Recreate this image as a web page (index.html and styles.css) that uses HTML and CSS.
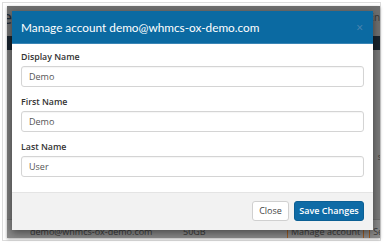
FILE: index.html
```html
<!DOCTYPE html>
<html>
<head>
    <link rel="stylesheet" href="styles.css">
</head>
<body>
<div class="frame">
    <div class="shot">
        <!-- page behind the dialog, dimmed by the backdrop -->
        <div class="page">
            <div class="page-top">
                <span class="logo">e</span>
                <span class="lang">Engl</span>
            </div>
            <div class="page-nav"></div>
            <div class="page-main">
                <span class="side-text">s</span>
            </div>
            <div class="page-row">
                <span class="cell-email">demo@whmcs-ox-demo.com</span>
                <span class="cell-quota">50GB</span>
                <span class="cell-btn">Manage account</span>
                <span class="cell-btn cell-last">Set P</span>
            </div>
        </div>

        <div class="modal">
            <div class="modal-header">
                <h4>Manage account demo@whmcs-ox-demo.com</h4>
                <span class="close-x">&times;</span>
            </div>
            <div class="modal-body">
                <div class="field">
                    <label>Display Name</label>
                    <input type="text" value="Demo">
                </div>
                <div class="field">
                    <label>First Name</label>
                    <input type="text" value="Demo">
                </div>
                <div class="field">
                    <label>Last Name</label>
                    <input type="text" value="User">
                </div>
            </div>
            <div class="modal-footer">
                <button class="btn btn-default">Close</button>
                <button class="btn btn-primary">Save Changes</button>
            </div>
        </div>
    </div>
</div>
</body>
</html>
```

FILE: styles.css
```css
body {
    margin: 0;
    background: #ffffff;
    font-family: "Open Sans", Arial, sans-serif;
}

.frame {
    margin: 2px;
    width: 379px;
    height: 239px;
    box-sizing: border-box;
    border: 1px solid #dcdcdc;
    padding: 3px 2px 4px 4px;
}

.shot {
    position: relative;
    width: 373px;
    height: 232px;
    overflow: hidden;
    background: #737373;
    box-shadow: 0 1px 3px rgba(0, 0, 0, 0.35);
}

.page {
    display: flex;
    flex-direction: column;
    height: 100%;
}

.page-top {
    height: 30px;
    display: flex;
    justify-content: space-between;
    background: #6e6e6e;
    color: #2a2a2a;
    font-size: 10px;
}

.logo {
    font-size: 18px;
    line-height: 22px;
    margin-left: -5px;
    color: #1d2a36;
}

.lang {
    line-height: 22px;
    margin-right: -8px;
    color: #3a3a3a;
}

.page-nav {
    height: 14px;
    background: #18232d;
}

.page-main {
    flex: 1;
    background: #787878;
    display: flex;
    justify-content: flex-end;
    border-bottom: 1px solid #6c6c6c;
}

.side-text {
    margin-top: 100px;
    margin-right: -2px;
    font-size: 9px;
    color: #3a3a3a;
}

.page-row {
    height: 18px;
    display: flex;
    align-items: flex-end;
    background: #888888;
    font-size: 9px;
    color: #3a3a3a;
    line-height: 12px;
    white-space: nowrap;
}

.page-row span {
    flex-shrink: 0;
}

.cell-email {
    margin-left: 23px;
    width: 153px;
}

.cell-quota {
    width: 104px;
}

.cell-btn {
    border-left: 1px solid #9a5a22;
    border-right: 1px solid #9a5a22;
    padding: 0 3px;
    margin-right: 5px;
}

.cell-last {
    border-right: none;
}

.modal {
    position: absolute;
    left: 5px;
    top: 5px;
    width: 361px;
    height: 219px;
    background: #ffffff;
    box-shadow: 0 3px 8px rgba(0, 0, 0, 0.45);
    display: flex;
    flex-direction: column;
}

.modal-header {
    height: 33px;
    background: #0b6aa2;
    border-bottom: 1px solid #3a85b5;
    box-sizing: border-box;
    display: flex;
    align-items: center;
    justify-content: space-between;
    padding: 0 10px 0 9px;
}

.modal-header h4 {
    margin: 0;
    font-family: Lato, "Open Sans", sans-serif;
    font-weight: normal;
    font-size: 11.8px;
    color: #ffffff;
}

.close-x {
    font-size: 12px;
    color: #4f87b0;
}

.modal-body {
    flex: 1;
    padding: 7px 9px 0 9px;
}

.field {
    margin-bottom: 9px;
}

.field label {
    display: block;
    font-size: 8.8px;
    font-weight: 600;
    line-height: 12px;
    color: #333333;
    margin-bottom: 3px;
}

.field input {
    display: block;
    width: 100%;
    height: 21px;
    box-sizing: border-box;
    border: 1px solid #d4d4d4;
    border-radius: 3px;
    padding: 0 7px;
    font-family: "Open Sans", Arial, sans-serif;
    font-size: 9px;
    color: #555555;
    box-shadow: inset 0 1px 1px rgba(0, 0, 0, 0.04);
}

.modal-footer {
    height: 38px;
    box-sizing: border-box;
    background: #f2f2f2;
    border-top: 1px solid #e4e4e4;
    display: flex;
    justify-content: flex-end;
    align-items: center;
    gap: 5px;
    padding: 0 9px 2px 0;
}

.btn {
    height: 20px;
    border-radius: 3px;
    font-family: "Open Sans", Arial, sans-serif;
    font-size: 9px;
    padding: 0 7px;
}

.btn-default {
    width: 37px;
    background: #ffffff;
    border: 1px solid #d0d0d0;
    color: #444444;
    padding: 0;
}

.btn-primary {
    width: 70px;
    background: #0e6ba6;
    border: 1px solid #0b5f94;
    color: #ffffff;
    font-weight: 600;
    padding: 0;
}
```
